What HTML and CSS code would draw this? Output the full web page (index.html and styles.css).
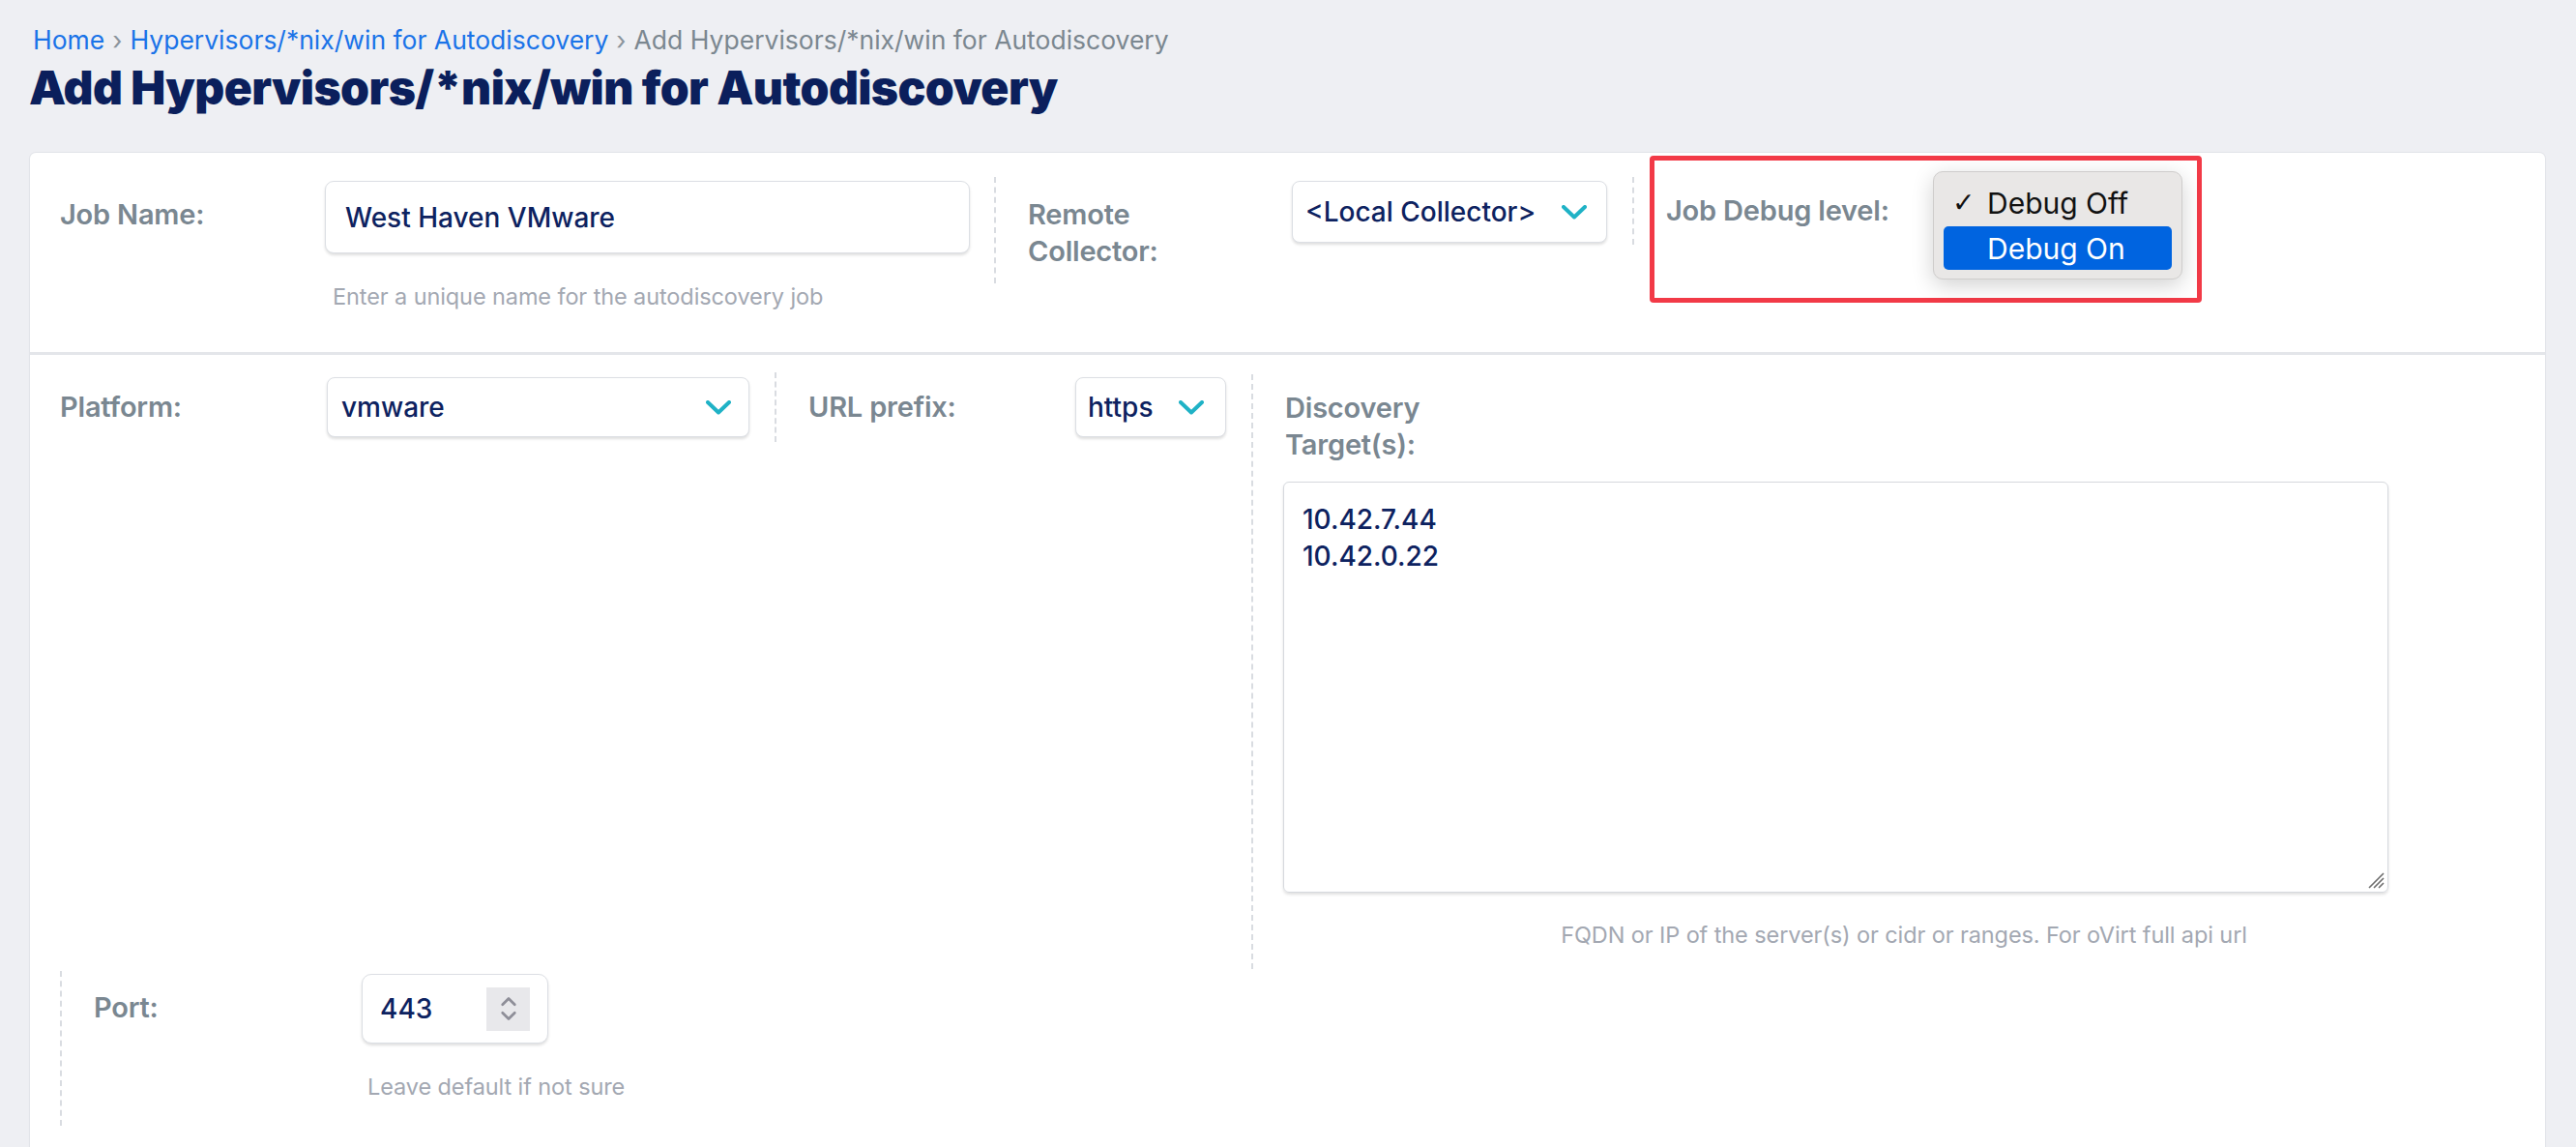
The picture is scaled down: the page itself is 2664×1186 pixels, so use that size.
FILE: index.html
```html
<!DOCTYPE html>
<html>
<head>
<meta charset="utf-8">
<title>Add Hypervisors/*nix/win for Autodiscovery</title>
<link rel="stylesheet" href="styles.css">
</head>
<body>
<nav class="crumbs">
  <a class="crumb-link">Home</a><span class="sep">›</span><a class="crumb-link">Hypervisors/*nix/win for Autodiscovery</a><span class="sep">›</span><span class="crumb-current">Add Hypervisors/*nix/win for Autodiscovery</span>
</nav>
<h1 class="page-title">Add Hypervisors/*nix/win for Autodiscovery</h1>

<main class="card">
  <section class="row row-top">
    <div class="field col-jobname">
      <label class="label">Job Name:</label>
      <div class="control">
        <div class="input input-name">West Haven VMware</div>
        <div class="hint">Enter a unique name for the autodiscovery job</div>
      </div>
    </div>
    <div class="vsep vsep-top"></div>
    <div class="field col-collector">
      <label class="label label-wrap">Remote Collector:</label>
      <div class="control">
        <div class="select select-collector">
          <span class="select-text">&lt;Local Collector&gt;</span>
          <svg class="chev" viewBox="0 0 26 15"><polyline points="2,2 13,12.5 24,2"/></svg>
        </div>
      </div>
    </div>
    <div class="vsep vsep-top2"></div>
    <div class="highlight">
      <label class="label label-debug">Job Debug level:</label>
      <div class="menu">
        <div class="menu-item"><span class="check">✓</span>Debug Off</div>
        <div class="menu-item selected"><span class="check"></span>Debug On</div>
      </div>
    </div>
  </section>

  <section class="row row-mid">
    <div class="field col-platform">
      <label class="label">Platform:</label>
      <div class="select select-platform">
        <span class="select-text">vmware</span>
        <svg class="chev" viewBox="0 0 26 15"><polyline points="2,2 13,12.5 24,2"/></svg>
      </div>
    </div>
    <div class="vsep vsep-mid"></div>
    <div class="field col-url">
      <label class="label">URL prefix:</label>
      <div class="select select-url">
        <span class="select-text">https</span>
        <svg class="chev" viewBox="0 0 26 15"><polyline points="2,2 13,12.5 24,2"/></svg>
      </div>
    </div>
    <div class="vsep vsep-long"></div>
    <div class="col-targets">
      <label class="label label-targets">Discovery Target(s):</label>
      <div class="textarea">
        <div>10.42.7.44</div>
        <div>10.42.0.22</div>
        <svg class="grip" viewBox="0 0 20 20"><path d="M19 4 L4 19 M19 9 L9 19 M19 14 L14 19"/></svg>
      </div>
      <div class="hint hint-center">FQDN or IP of the server(s) or cidr or ranges. For oVirt full api url</div>
    </div>
  </section>

  <section class="row row-port">
    <div class="field col-port">
      <label class="label">Port:</label>
      <div class="control">
        <div class="input input-port">
          <span class="port-value">443</span>
          <span class="spinner">
            <svg viewBox="0 0 20 40"><polyline points="4,16 10,10 16,16"/><polyline points="4,24 10,30 16,24"/></svg>
          </span>
        </div>
        <div class="hint">Leave default if not sure</div>
      </div>
    </div>
  </section>
</main>
</body>
</html>
```

FILE: styles.css
```css
* { box-sizing: border-box; }

body {
  margin: 0;
  background: #eeeff3;
  font-family: Inter, "Noto Sans", sans-serif;
  color: #0d2260;
  overflow: hidden;
  height: 1186px;
}

.crumbs {
  padding: 24px 0 0 34px;
  font-size: 26.5px;
  line-height: 34px;
  height: 60px;
  letter-spacing: 0;
}
.crumb-link { color: #1a73e8; }
.sep { color: #8a949c; margin: 0 8px; }
.crumb-current { color: #7b8790; }

.page-title {
  margin: 0;
  padding-left: 30px;
  font-size: 48px;
  line-height: 62px;
  font-weight: 900;
  color: #0b1f5c;
  letter-spacing: -0.6px;
  height: 98px;
}

.card {
  margin: 0 32px 0 31px;
  background: #fff;
  border-radius: 6px 6px 0 0;
  box-shadow: 0 0 0 1px #e2e4e9, 0 1px 3px rgba(0,0,0,0.04);
  height: 1040px;
}

.row { display: flex; }

.row-top {
  height: 209px;
  border-bottom: 3px solid #e4e6ea;
}

.label {
  font-size: 29px;
  font-weight: 600;
  color: #7a8791;
  line-height: 38px;
  display: block;
  letter-spacing: -0.2px;
}

.field { display: flex; align-items: flex-start; }
.field .label { flex: 0 0 auto; }

.col-jobname { width: 997px; padding: 45px 26px 0 31px; }
.col-jobname .label { width: 274px; }
.control { display: flex; flex-direction: column; }

.input {
  background: #fff;
  border: 1px solid #dcdfe4;
  border-radius: 9px;
  box-shadow: 0 2px 3px rgba(0,0,0,0.13);
  font-size: 28px;
  font-weight: 500;
  color: #0d2260;
  display: flex;
  align-items: center;
}
.input-name { width: 667px; height: 75px; padding-left: 20px; margin-top: -16px; }

.hint {
  font-size: 23.5px;
  color: #a3a8b2;
  line-height: 30px;
  letter-spacing: -0.1px;
}
.col-jobname .hint { margin-top: 30px; padding-left: 8px; }

.vsep {
  flex: 0 0 auto;
  width: 0;
  border-left: 2px dashed #d9dce1;
}
.vsep-top { margin-top: 25px; height: 110px; }
.vsep-top2 { margin-top: 25px; height: 70px; }

.col-collector { width: 658px; padding: 45px 0 0 33px; }
.col-collector .label { width: 273px; padding-right: 90px; }

.select {
  background: #fff;
  border: 1px solid #dcdfe4;
  border-radius: 8px;
  box-shadow: 0 2px 3px rgba(0,0,0,0.13);
  display: flex;
  align-items: center;
  justify-content: space-between;
  font-size: 28px;
  font-weight: 500;
  color: #0d2260;
}
.select-collector { width: 326px; height: 64px; margin-top: -16px; padding: 0 20px 0 13px; }
.chev { width: 26px; height: 15px; flex: 0 0 auto; }
.chev polyline { fill: none; stroke: #1fb2c6; stroke-width: 4; stroke-linecap: round; stroke-linejoin: round; }

.highlight {
  margin: 3px 0 0 16px;
  width: 571px;
  height: 152px;
  border: 5px solid #f23a47;
  border-radius: 4px;
  display: flex;
  align-items: flex-start;
  padding: 11px 14px 0 12px;
}
.label-debug { width: 276px; margin-top: 22px; }

.menu {
  width: 258px;
  height: 112px;
  background: #e9e7e6;
  border: 1px solid #cfcdcc;
  border-radius: 10px;
  box-shadow: 0 6px 22px rgba(0,0,0,0.18);
  padding: 9px 10px;
  display: flex;
  flex-direction: column;
  gap: 2px;
}
.menu-item {
  height: 45px;
  display: flex;
  align-items: center;
  font-size: 30px;
  color: #111;
  border-radius: 5px;
  font-family: Inter, "Liberation Sans", sans-serif;
}
.check {
  width: 45px;
  padding-left: 9px;
  font-family: "DejaVu Sans", sans-serif;
  font-size: 28px;
}
.menu-item.selected { background: #0064e0; color: #fff; }

.row-mid { height: 634px; }

.col-platform { width: 770px; padding: 35px 26px 0 31px; }
.col-platform .label { width: 276px; }
.select-platform { width: 437px; height: 62px; margin-top: -12px; padding: 0 18px 0 14px; }

.vsep-mid { margin-top: 18px; height: 72px; }

.col-url { width: 491px; padding: 35px 0 0 33px; }
.col-url .label { width: 276px; }
.select-url { width: 156px; height: 62px; margin-top: -12px; padding: 0 22px 0 12px; }

.vsep-long { margin-top: 20px; height: 615px; }

.col-targets {
  flex: 1;
  padding: 36px 0 0 0;
  display: flex;
  flex-direction: column;
}
.label-targets { width: 200px; margin-left: 33px; }
.textarea {
  position: relative;
  margin: 19px 0 0 31px;
  width: 1143px;
  height: 425px;
  border: 1px solid #d6d9de;
  border-radius: 6px;
  box-shadow: 0 2px 3px rgba(0,0,0,0.12);
  padding: 19px 0 0 19px;
  font-size: 28px;
  font-weight: 500;
  line-height: 38px;
  color: #0d2260;
}
.grip {
  position: absolute;
  right: 3px;
  bottom: 3px;
  width: 20px;
  height: 20px;
}
.grip path { stroke: #6e6e6e; stroke-width: 1.6; fill: none; }

.hint-center { text-align: center; margin-top: 29px; padding-left: 10px; }

.row-port { height: 190px; }
.col-port {
  margin: 3px 0 0 31px;
  padding: 19px 0 0 33px;
  border-left: 2px dashed #d9dce1;
  height: 160px;
}
.col-port .label { width: 277px; }
.input-port {
  width: 193px;
  height: 72px;
  margin-top: -16px;
  padding: 0 18px 0 18px;
  justify-content: space-between;
  border-radius: 10px;
}
.spinner {
  width: 45px;
  height: 45px;
  background: #e8e8eb;
  display: flex;
  align-items: center;
  justify-content: center;
}
.spinner svg { width: 22px; height: 42px; }
.spinner polyline { fill: none; stroke: #8e8e98; stroke-width: 2.6; stroke-linecap: round; stroke-linejoin: round; }
.col-port .hint { margin-top: 30px; padding-left: 6px; }
```
